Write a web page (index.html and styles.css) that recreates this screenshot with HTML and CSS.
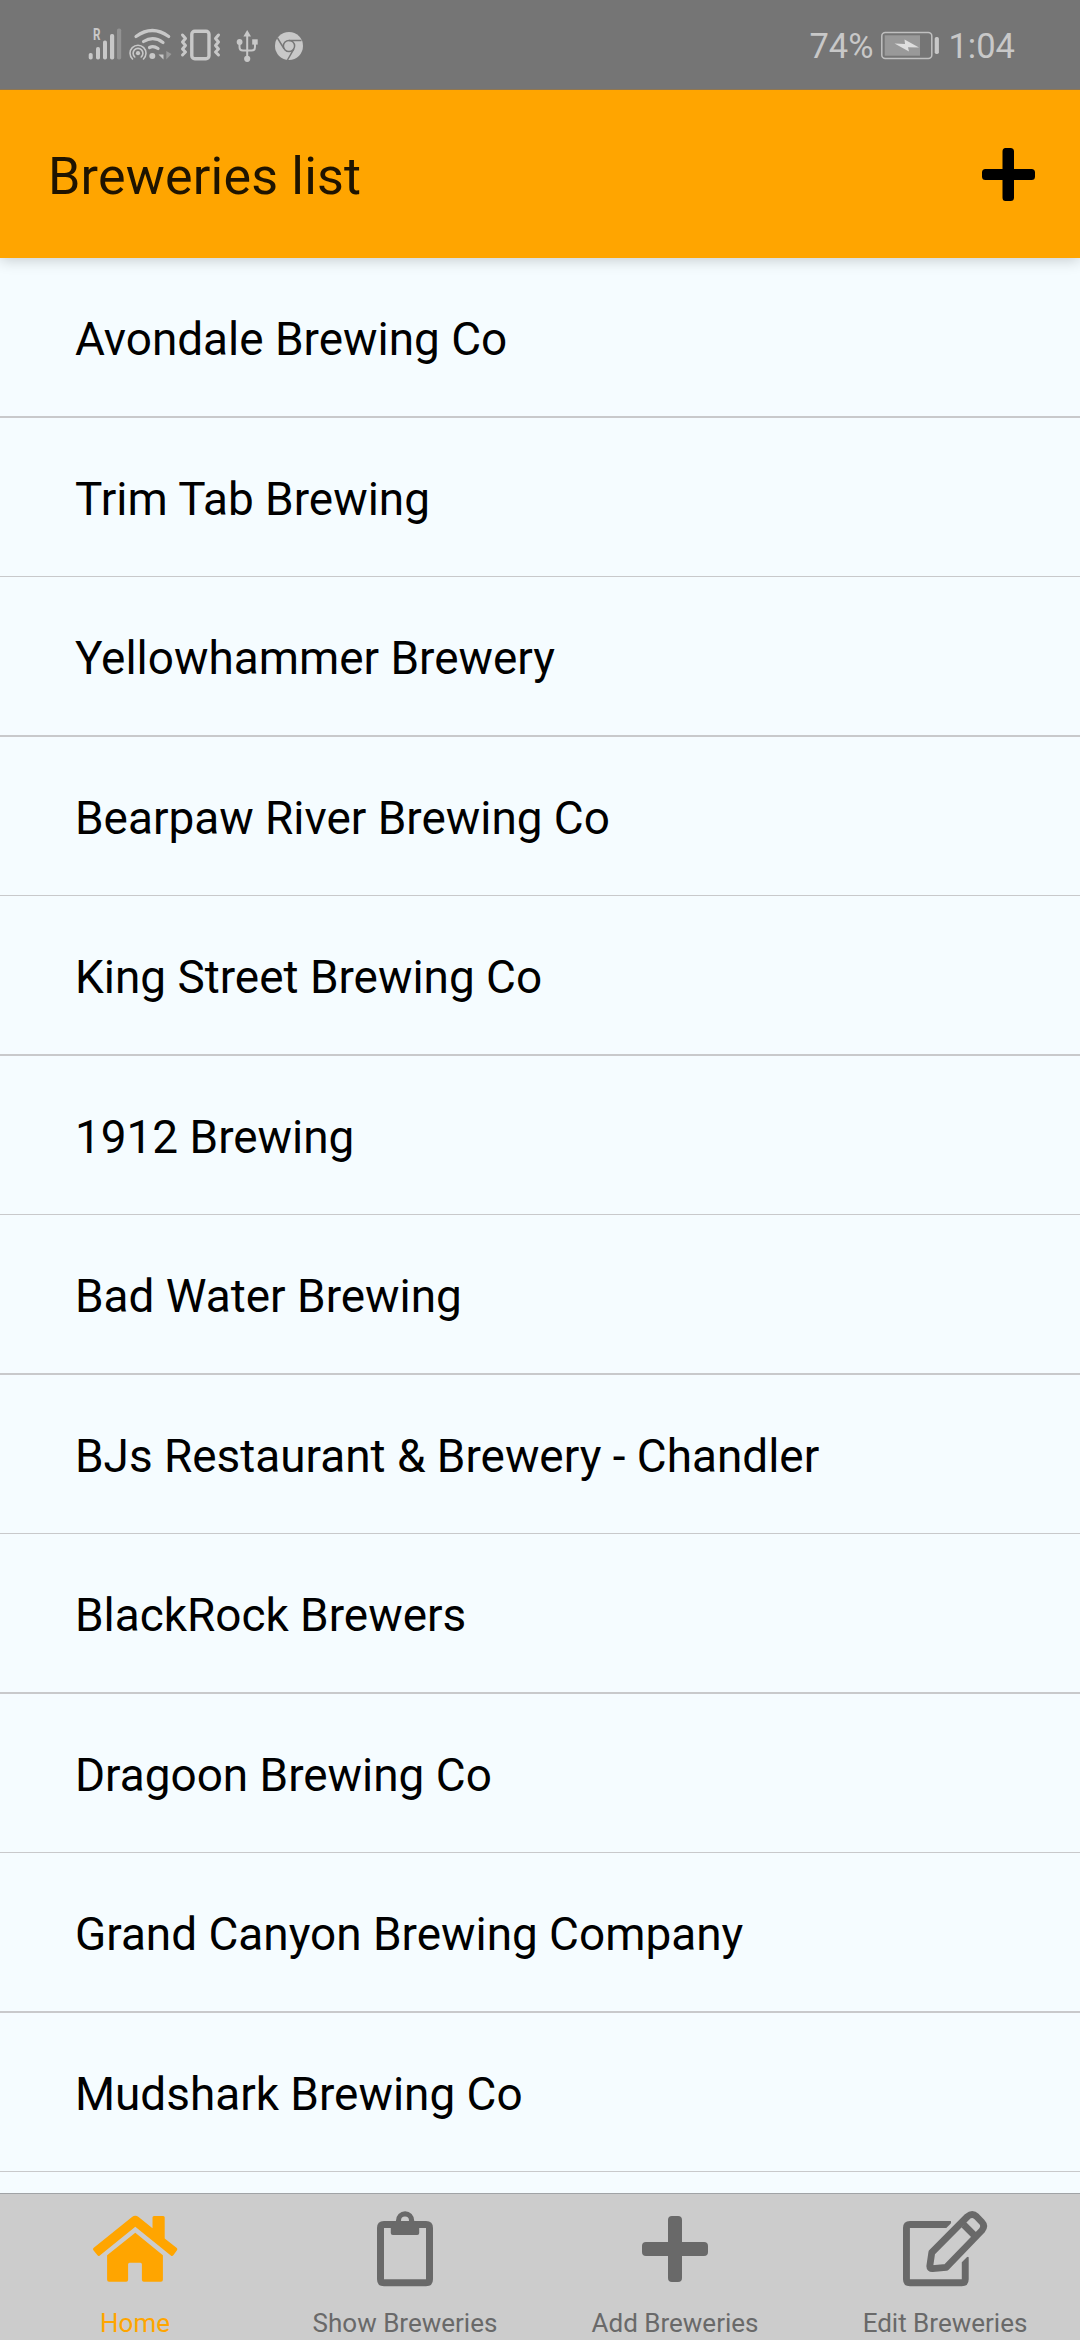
FILE: index.html
```html
<!DOCTYPE html>
<html lang="en">
<head>
<meta charset="utf-8">
<title>Breweries list</title>
<link rel="stylesheet" href="styles.css">
</head>
<body>
<div class="screen">
  <div class="status">
    <svg class="status-icons" width="230" height="50" viewBox="80 20 230 50">
      <g fill="#c8c8c8">
        <rect x="88.7" y="53" width="4" height="6.5" rx="1.8"/>
        <rect x="96" y="47" width="4" height="12.5" rx="1.8"/>
        <rect x="103" y="40.5" width="4" height="19" rx="1.8"/>
        <rect x="110" y="34" width="4.2" height="25.5" rx="1.8"/>
        <rect x="117" y="28.5" width="4.2" height="31" rx="1.8" fill="#929292"/>
        <text class="roaming" x="93" y="40" textLength="7.5" lengthAdjust="spacingAndGlyphs">R</text>
        <circle cx="152.3" cy="56" r="3"/>
        <path d="M163.5 51.2V59.5L158.5 54.5H163.5z"/>
        <path d="M166.3 51V59.5L171.5 54z" fill="#999"/>
        <circle cx="138" cy="53.2" r="2.1"/>
      </g>
      <g fill="none" stroke="#c8c8c8" stroke-linecap="round">
        <g stroke-width="3.2">
          <path d="M136 36.5Q152.3 24.500 168.700 36.500"/>
          <path d="M143.500 41.500Q153.500 35.500 163 42.500"/>
          <path d="M149.500 47.500Q153.500 45.500 158 48.500"/>
        </g>
        <g stroke-width="1.6">
          <path d="M134.800 57A4.900 4.900 0 1 1 141.200 57"/>
          <path d="M132.500 59.300A8 8 0 1 1 143.500 59.300" transform="translate(0 -.3)"/>
        </g>
        <rect x="191.800" y="31.200" width="17.200" height="27.600" rx="3" stroke-width="3.400"/>
        <g stroke-width="3" stroke-linejoin="round">
          <path d="M182.500 35L185.500 38.500L182.500 42L185.500 45.500L182.500 49L185.500 52L182.500 55"/>
          <path d="M218.500 35L215.500 38.500L218.500 42L215.500 45.500L218.500 49L215.500 52L218.500 55"/>
        </g>
        <path stroke-width="2" d="M247.200 58V33M239.500 43V47Q239.500 50.500 243 50.500H251.500Q255 50.500 255 47V43"/>
      </g>
      <g fill="#c8c8c8">
        <path d="M247.200 30L251 36.500H243.400z"/>
        <circle cx="247.200" cy="58.800" r="3.100"/>
        <circle cx="239.600" cy="42" r="2.900"/>
        <rect x="252.200" y="39.300" width="5.500" height="5.300"/>
        <circle cx="289" cy="46" r="14"/>
      </g>
      <g fill="none" stroke="#777" stroke-width="1.500">
        <circle cx="289" cy="46" r="5.600"/>
        <path d="M289 40.400H301.500M284.100 48.800L277.500 38M293.900 48.800L287.500 60"/>
      </g>
    </svg>
    <div class="status-right">
      <span class="pct">74%</span>
      <svg class="battery" width="60" height="30" viewBox="880 31 60 30">
        <rect x="881.800" y="32.600" width="50" height="26" rx="3.500" fill="none" stroke="#c0c0c0" stroke-width="1.500"/>
        <rect x="884.700" y="35.300" width="35.300" height="20.400" fill="#999"/>
        <rect x="934.700" y="37" width="4.200" height="17" rx="1.800" fill="#c8c8c8"/>
        <path d="M894.500 43.500L905 44L904.500 39.500L919 47.500L908 47.300L909 51.500z" fill="#dedede"/>
      </svg>
      <span class="time">1:04</span>
    </div>
  </div>
  <header class="header">
    <h1 class="title">Breweries list</h1>
    <svg width="53" height="53" viewBox="0 0 53 53"><path fill="#000" d="M23.500 0H28.500Q32 0 32 3.500V21H49.500Q53 21 53 24.500V28.500Q53 32 49.500 32H32V49.500Q32 53 28.500 53H23.500Q20.500 53 20.500 49.500V32H3.500Q0 32 0 28.500V24.500Q0 21 3.500 21H20.500V3.500Q20.500 0 23.500 0z"/></svg>
  </header>
  <ul class="list">
    <li class="row">Avondale Brewing Co</li>
    <li class="row">Trim Tab Brewing</li>
    <li class="row">Yellowhammer Brewery</li>
    <li class="row">Bearpaw River Brewing Co</li>
    <li class="row">King Street Brewing Co</li>
    <li class="row">1912 Brewing</li>
    <li class="row">Bad Water Brewing</li>
    <li class="row">BJs Restaurant &amp; Brewery - Chandler</li>
    <li class="row">BlackRock Brewers</li>
    <li class="row">Dragoon Brewing Co</li>
    <li class="row">Grand Canyon Brewing Company</li>
    <li class="row">Mudshark Brewing Co</li>
  </ul>
  <nav class="tabs">
    <a class="tab active">
      <svg width="90" height="80" viewBox="90 2209 90 80" fill="currentColor">
        <path d="M93.500 2248L132 2217Q135.300 2214.500 138.600 2217L152.500 2228.300V2217.500Q152.500 2216 154 2216H163.200Q164.700 2216 164.700 2217.500V2238.500L176.800 2248Q177.800 2249 177 2250.200L173.500 2255Q172.200 2256.800 170.800 2255.500L135.300 2226.700L99.800 2255.500Q98.500 2256.800 97.300 2255L93.400 2250.300Q92.500 2249 93.500 2248z"/>
        <path d="M135.300 2232.800L162.900 2255.300V2279.800Q162.900 2281.800 160.900 2281.800H143.900Q141.900 2281.800 141.900 2279.800V2264.200Q141.900 2262.700 140.400 2262.700H129.600Q128.100 2262.700 128.100 2264.200V2279.800Q128.100 2281.800 126.100 2281.800H109.100Q107.100 2281.800 107.100 2279.800V2255.300z"/>
      </svg>
      <span class="label">Home</span>
    </a>
    <a class="tab">
      <svg width="90" height="80" viewBox="360 2209 90 80" fill="currentColor">
        <path fill-rule="evenodd" d="M384 2221H426Q433 2221 433 2228V2279.300Q433 2286.300 426 2286.300H384Q377 2286.300 377 2279.300V2228Q377 2221 384 2221zM384 2228V2279.300H426V2228z"/>
        <path fill-rule="evenodd" d="M395.900 2221A9.200 9.800 0 0 1 414.300 2221L419.200 2226V2233Q419.200 2235 417.200 2235H392.800Q390.800 2235 390.800 2233V2226zM405 2216.500A4 4 0 1 0 405 2224.500A4 4 0 1 0 405 2216.500z"/>
      </svg>
      <span class="label">Show Breweries</span>
    </a>
    <a class="tab">
      <svg width="90" height="80" viewBox="630 2209 90 80" fill="currentColor">
        <path d="M672 2216H678Q682 2216 682 2220V2242H704Q708 2242 708 2246V2252Q708 2256 704 2256H682V2278Q682 2282 678 2282H672Q668 2282 668 2278V2256H646Q642 2256 642 2252V2246Q642 2242 646 2242H668V2220Q668 2216 672 2216z"/>
      </svg>
      <span class="label">Add Breweries</span>
    </a>
    <a class="tab">
      <svg width="90" height="80" viewBox="900 2209 90 80" fill="currentColor">
        <path d="M950.800 2221H910Q903 2221 903 2228V2279.300Q903 2286.300 910 2286.300H961.700Q968.700 2286.300 968.700 2279.300V2257.500Q968.300 2256 966.800 2257.300L961.800 2262.300V2279.300H909.900V2228H946.300L950.800 2223.500Q951.500 2221.500 950.800 2221z"/>
        <path fill="none" stroke="currentColor" stroke-width="6.800" stroke-linejoin="round" d="M931.800 2252.500L967.500 2216.500Q972.300 2212.500 976.500 2216.500L981.800 2222Q985.600 2226 981.800 2230.500L946.200 2267.300L932.500 2268.600Q929.600 2268.700 929.800 2266zM964 2225L974.500 2235.500"/>
      </svg>
      <span class="label">Edit Breweries</span>
    </a>
  </nav>
</div>
</body>
</html>
```

FILE: styles.css
```css
* { box-sizing: border-box; }
body { margin: 0; font-family: Roboto, sans-serif; }
svg { display: block; flex: none; }

.screen {
  width: 1080px;
  height: 2340px;
  display: flex;
  flex-direction: column;
  overflow: hidden;
  background: #f5fcff;
}

.status {
  height: 90px;
  flex: none;
  display: flex;
  justify-content: space-between;
  align-items: center;
  padding: 0 65px 0 80px;
  background: #757575;
  border-bottom: 1px solid #90764f;
  color: #c8c8c8;
  font-size: 34.5px;
}
.status-right { display: flex; align-items: center; }
.battery { margin: 3px 8px 0 7px; }
.pct, .time { line-height: 40px; padding-top: 3px; }
.roaming { font-size: 16px; font-weight: 700; }

.header {
  height: 168px;
  flex: none;
  display: flex;
  justify-content: space-between;
  align-items: center;
  padding: 0 45px 0 48px;
  background: #ffa500;
  box-shadow: 0 2px 14px rgba(0, 0, 0, .2);
  clip-path: inset(0 0 -24px);
  z-index: 1;
}
.title {
  margin: 4px 0 0;
  font-size: 52px;
  font-weight: 400;
  letter-spacing: .2px;
  color: #1f1400;
}

.list { flex: 1; min-height: 0; margin: 0; padding: 0; list-style: none; }
.row {
  height: 160px;
  padding: 0 75px;
  border-bottom: 2px solid #c8c9cb;
  font-size: 45.9px;
  line-height: 162px;
  color: #000;
}
.row:nth-child(even) { height: 159px; border-bottom-width: 1px; }

.tabs {
  height: 147px;
  flex: none;
  display: grid;
  grid-template-columns: repeat(4, 1fr);
  background: #ccc;
  border-top: 1px solid #a0a3a6;
  color: #696969;
}
.tab {
  display: flex;
  flex-direction: column;
  align-items: center;
  padding-top: 15px;
}
.tab.active { color: #ffa500; }
.label { margin-top: 18px; font-size: 26px; line-height: 32px; white-space: nowrap; }
```
